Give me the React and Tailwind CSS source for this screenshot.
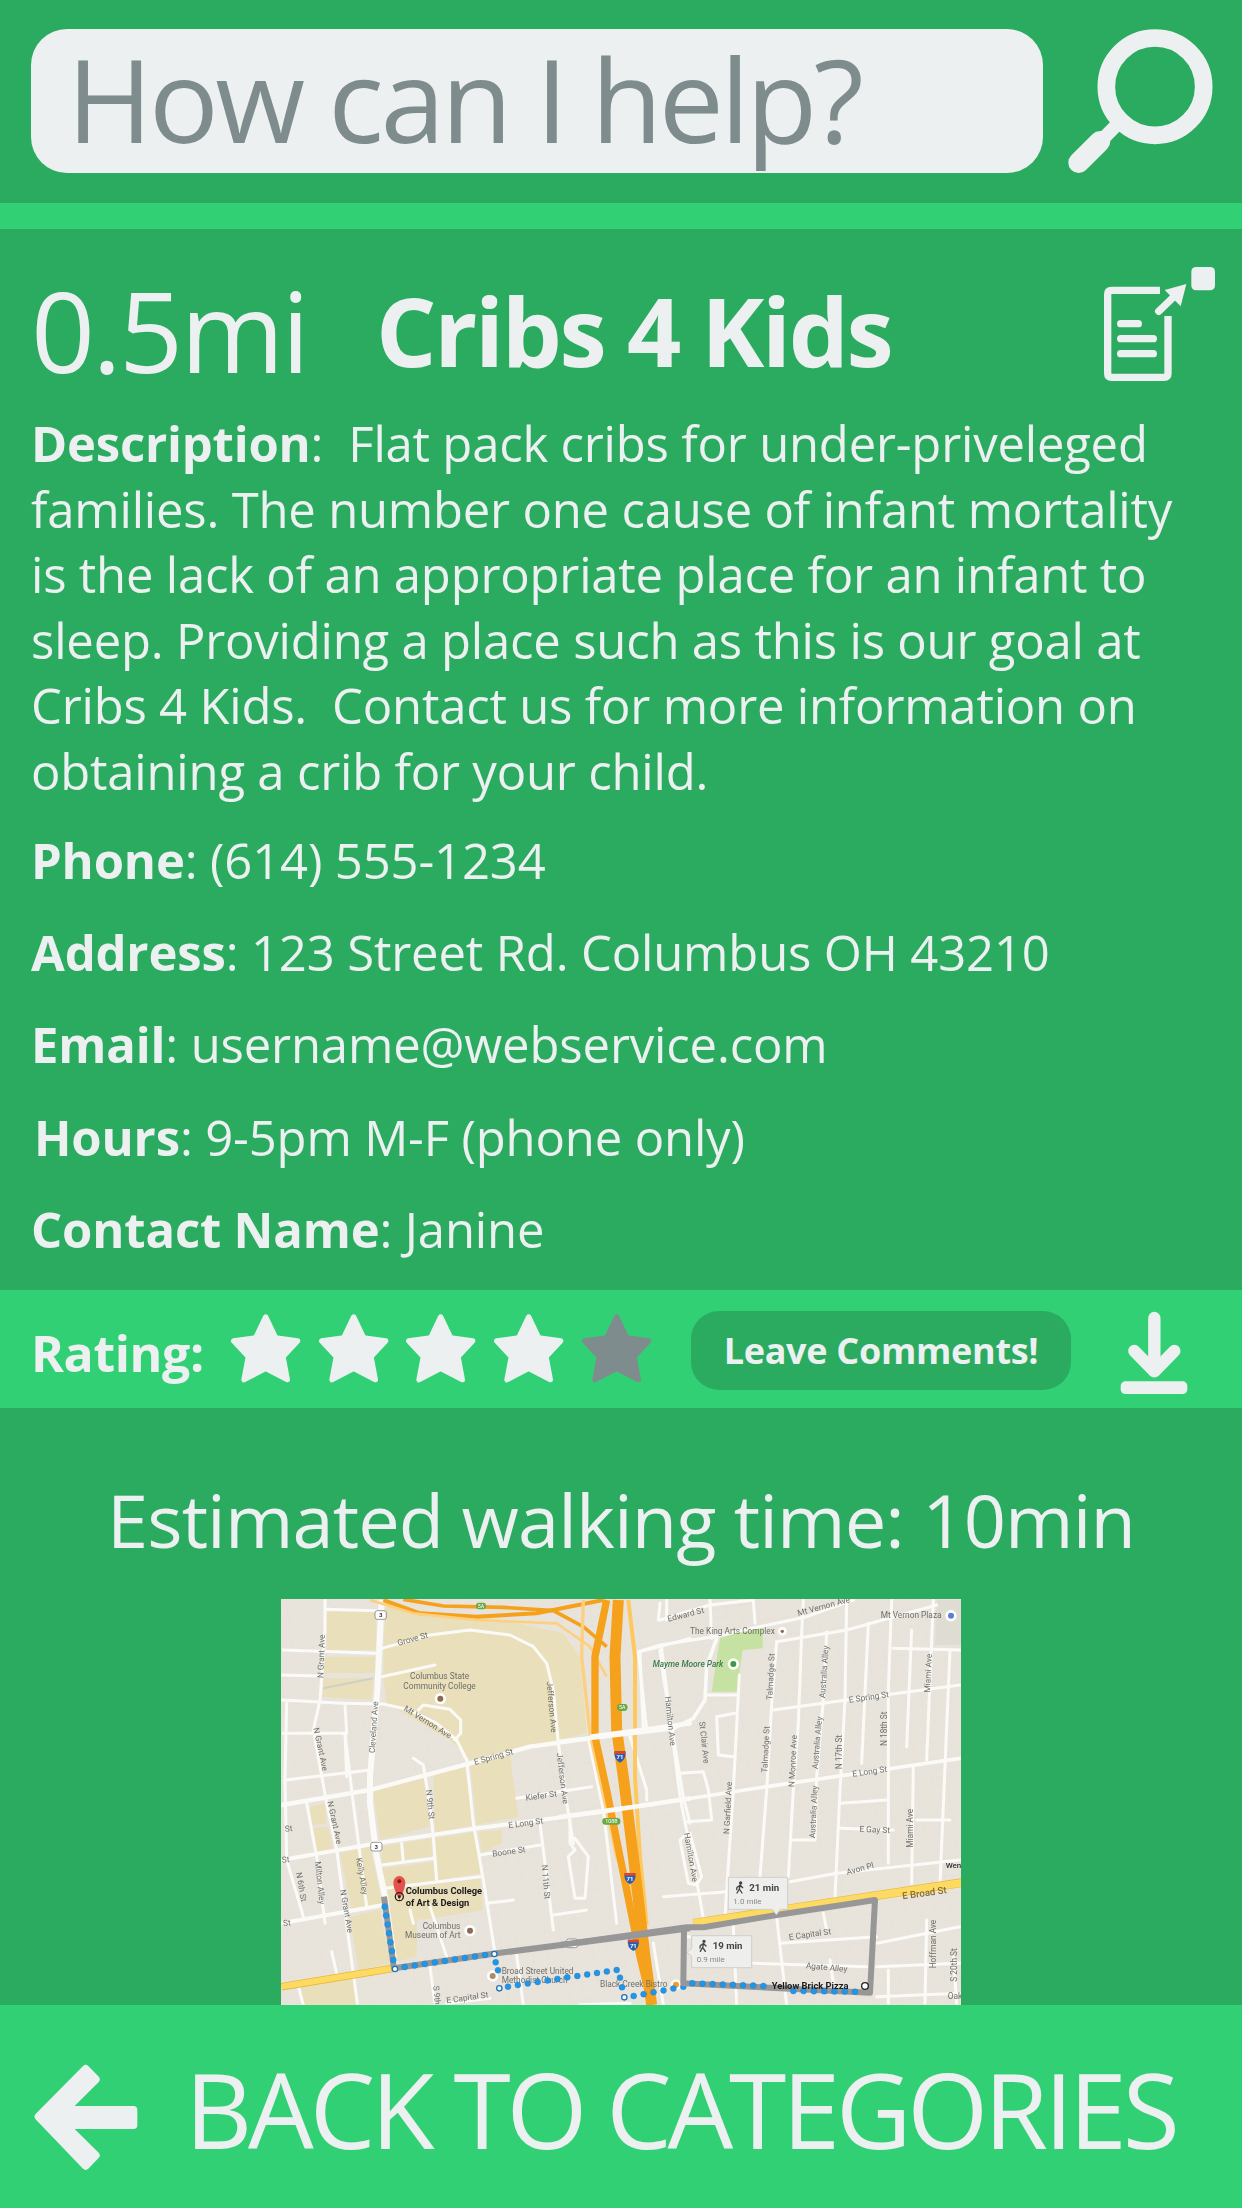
const SANS = { fontFamily: '"Open Sans", "Noto Sans", sans-serif' };

function Magnifier() {
  return (
    <svg width="180" height="165" viewBox="0 0 540 495" className="shrink-0">
      <circle cx="315" cy="200" r="146" fill="none" stroke="#ecf0f1" strokeWidth="53" />
      <path d="M150 365 L200 315" stroke="#ecf0f1" strokeWidth="40" />
      <path d="M86 428 L150 364" stroke="#ecf0f1" strokeWidth="62" strokeLinecap="round" />
    </svg>
  );
}

function DocIcon() {
  return (
    <svg width="182" height="160" viewBox="0 0 546 480" className="shrink-0">
      <path d="M300 151 H155 Q143 151 143 163 V400 Q143 412 155 412 H312 Q324 412 324 400 V228" fill="none" stroke="#ecf0f1" strokeWidth="22" />
      <rect x="394" y="81" width="71" height="70" rx="14" fill="#ecf0f1" />
      <path d="M296 214 L345 167" stroke="#ecf0f1" strokeWidth="22" strokeLinecap="round" />
      <path d="M379 132 L362 199 L314 150 Z" fill="#ecf0f1" />
      <rect x="171" y="240" width="75" height="22" rx="11" fill="#ecf0f1" />
      <rect x="171" y="285" width="120" height="22" rx="11" fill="#ecf0f1" />
      <rect x="171" y="330" width="120" height="22" rx="11" fill="#ecf0f1" />
    </svg>
  );
}

function Star({ fill }) {
  return (
    <svg width="82" height="90" viewBox="0 0 246 270" className="shrink-0">
      <path d="M122 36 L152 99 L218 108 L174 155 L187 224 L122 190 L57 224 L70 155 L26 108 L92 99 Z" fill={fill} stroke={fill} strokeWidth="16" strokeLinejoin="round" />
    </svg>
  );
}

function Download() {
  return (
    <svg width="110" height="105" viewBox="0 0 330 315" className="shrink-0">
      <path d="M163 54 V205" stroke="#ecf0f1" strokeWidth="37" strokeLinecap="round" />
      <path d="M103 153 L163 214 L223 153" fill="none" stroke="#ecf0f1" strokeWidth="37" strokeLinecap="round" strokeLinejoin="round" />
      <rect x="62" y="244" width="200" height="38" rx="14" fill="#ecf0f1" />
    </svg>
  );
}

function BackArrow() {
  return (
    <svg width="140" height="135" viewBox="0 0 420 405" className="shrink-0">
      <path d="M56 200 L197 57 L227 88 L135 180 H340 V225 H135 L227 316 L197 347 Z" fill="#ecf0f1" stroke="#ecf0f1" strokeWidth="24" strokeLinejoin="round" />
    </svg>
  );
}

const R3 = [
  ['40,180 320,190'], ['170,58 320,62'], ['165,30 165,120 150,330 130,420'], ['35,255 150,258'], ['335,260 495,225'],
  ['335,175 480,135 600,120 720,135 790,170 830,220 850,300 865,460 890,640 910,760'],
  ['35,330 220,340 340,342 420,360 500,400 560,450 590,510 610,700 640,870 675,1090'],
  ['445,360 460,345 540,358 572,390 572,430 555,450'],
  ['35,645 300,600 600,520 780,470 960,445 1260,400', 13], ['35,810 320,760 620,715 1000,665 1260,625', 12],
  ['40,430 225,430 230,560'], ['225,340 230,430'], ['130,420 170,640 200,780 262,1240'], ['225,430 250,640 290,950'],
  ['45,570 300,540'], ['50,340 45,570 50,810 100,980'], ['110,640 140,800 165,1000'], ['430,505 460,525 480,650 490,740 500,870'],
  ['335,825 490,805'], ['395,760 400,815'], ['345,895 630,860'], ['740,625 965,590'], ['630,795 810,765'], ['810,700 850,1020'],
  ['900,690 900,760 915,780 895,800 915,925 945,925 955,800 915,745'], ['35,1000 340,945', 12], ['650,940 730,930'], ['420,960 430,1000'],
  ['480,950 530,1100'], ['955,445 1000,660 1040,1000'], ['1080,440 1130,600 1130,630'], ['1110,190 1120,420'],
  ['1110,185 1170,170 1260,145'], ['1170,180 1180,260 1240,620 1260,700'], ['1190,90 1190,30'], ['850,975 950,960'],
  ['480,1130 495,1245'], ['740,1095 760,1245'], ['185,1085 200,1150'], ['85,1190 100,1245'], ['530,1240 660,1225'], ['930,1245 1080,1240', 10],
  ['1150,1060 1180,1245'], ['1240,1040 1260,1040'],
];
const R4 = [
  ['300,90 450,45 580,30'], ['300,40 295,90'], ['585,100 580,30'], ['450,30 455,145'], ['650,155 860,120 1130,45'],
  ['460,140 740,80 880,30'], ['235,185 300,165 460,140'], ['235,185 260,420'], ['305,175 320,300 360,620 415,900 430,985'],
  ['470,145 440,230 435,330 400,385 340,415', 11], ['0,455 340,415', 13], ['445,315 530,315'], ['640,360 860,330 1200,285'],
  ['470,380 525,370'], ['470,380 475,495 520,500'], ['360,550 430,545 445,600 455,690 380,695'], ['538,255 520,600 495,980'],
  ['650,155 635,340 620,600 600,860'], ['730,30 725,130 715,400 700,600 685,860'], ['800,125 790,330 770,560 765,750 692,750'],
  ['860,30 855,330 840,600 825,920'], ['925,100 915,310 905,520'], ['995,30 985,300 985,820'], ['1055,120 1040,470'],
  ['1120,30 1100,510'], ['1060,530 1055,880'], ['1170,180 1140,880'], ['1000,175 1200,180'], ['0,680 360,630 620,590 1200,505', 11],
  ['840,640 980,630'], ['840,715 1000,720'], ['1070,690 1170,690'], ['690,875 830,850 1200,810'], ['310,920 500,905'],
  ['375,735 360,750 385,880 410,885 425,860 390,730'], ['660,1060 950,1040'], ['950,1060 1200,1010'], ['580,1120 920,1130'], ['950,1130 1200,1120'],
  ['1100,990 1095,1240'], ['1180,1100 1190,1240'], ['650,980 680,1245'], ['520,1010 530,1245'], ['790,970 800,1020'],
  ['810,1110 820,1180'], ['985,1140 985,1240'], ['950,1220 1200,1210'],
];
const L3 = [
  ['Grove St', 385, 167, -15], ['N Grant Ave', 160, 265, -88], ['Columbus State', 420, 268, 0], ['Community College', 400, 297, 0],
  ['Mt Vernon Ave', 400, 360, 32], ['Cleveland Ave', 314, 490, -86], ['N Grant Ave', 130, 415, 78], ['E Spring St', 615, 525, -16],
  ['Jefferson Ave', 830, 275, 85], ['Jefferson Ave', 860, 490, 83], ['Kiefer St', 768, 632, -8], ['N 9th St', 468, 600, 84],
  ['N Grant Ave', 172, 635, 78], ['E Long St', 716, 715, -8], ['Boone St', 668, 800, -8], ['N 11th St', 815, 825, 85],
  ['Kelly Alley', 258, 805, 80], ['Milton Alley', 135, 815, 84], ['N 6th St', 78, 848, 80], ['N Grant Ave', 210, 900, 80],
  ['Columbus', 458, 1016, 0], ['Museum of Art', 405, 1044, 0], ['Broad Street United', 695, 1152, 0], ['Methodist Church', 695, 1178, 0],
  ['Black Creek Bistro', 990, 1192, 0], ['S 9th', 490, 1188, 85], ['E Capital St', 530, 1240, -8], ['St', 40, 1008, -5], ['St', 45, 725, -5], ['St', 36, 818, -5],
];
const L4 = [
  ['Edward St', 325, 95, -14], ['Mt Vernon Ave', 715, 78, -15], ['Mt Vernon Plaza', 962, 85, 0], ['The King Arts Complex', 390, 132, 0],
  ['Hamilton Ave', 315, 320, 84], ['Talmadge St', 637, 330, -87], ['Australia Alley', 795, 325, -86], ['Miami Ave', 1110, 308, -87],
  ['E Spring St', 868, 338, -8], ['St Clair Ave', 418, 395, 84], ['Talmadge St', 622, 548, -87], ['N Monroe Ave', 703, 592, -87],
  ['Australia Alley', 773, 538, -85], ['N 17th St', 847, 538, -90], ['N 18th St', 982, 468, -90], ['E Long St', 878, 560, -8],
  ['N Garfield Ave', 508, 733, -87], ['Australia Alley', 765, 745, -87], ['E Gay St', 898, 725, 3], ['Miami Ave', 1058, 773, -90],
  ['Avon Pl', 862, 855, -15], ['Hamilton Ave', 372, 730, 80], ['E Capital St', 688, 1050, -8], ['Agate Alley', 737, 1135, 5],
  ['Hoffman Ave', 1128, 1135, -90], ['S 20th St', 1192, 1175, -90], ['Oak', 1163, 1228, 0],
];
const Label = ([t, x, y, r]) => (
  <text key={t + x + y} x={x} y={y} fontSize="25" fill="#6f6f6b" fontFamily="Roboto, sans-serif" transform={r ? `rotate(${r} ${x} ${y})` : undefined}>{t}</text>
);
const Roads = ({ list }) => list.map(([p, w], i) => (
  <polyline key={i} points={p} fill="none" stroke="#fbfaf7" strokeWidth={w || 9} strokeLinejoin="round" strokeLinecap="round" />
));
const Tan = ({ p }) => <polygon points={p} fill="#e9dfbb" />;
const Dots = ({ d }) => d.map(([x, y], i) => <circle key={i} cx={x} cy={y} r="9" fill="#2196e6" stroke="#1a73c0" strokeWidth="1" />);
const line = (x0, y0, x1, y1, n) => Array.from({ length: n }, (_, i) => [x0 + ((x1 - x0) * i) / (n - 1), y0 + ((y1 - y0) * i) / (n - 1)]);
const Shield = ({ x, y }) => (
  <g>
    <path d={`M${x - 16} ${y - 16} H${x + 16} Q${x + 20} ${y + 8} ${x} ${y + 18} Q${x - 20} ${y + 8} ${x - 16} ${y - 16} Z`} fill="#2a5db0" />
    <path d={`M${x - 16} ${y - 16} H${x + 16} L${x + 17} ${y - 8} H${x - 17} Z`} fill="#d9452f" />
    <text x={x} y={y + 8} fontSize="18" fill="#fff" textAnchor="middle" fontFamily="Roboto, sans-serif" fontWeight="700">71</text>
  </g>
);
const Exit = ({ x, y, t, w = 30 }) => (
  <g>
    <rect x={x - w / 2} y={y - 10} width={w} height="20" rx="9" fill="#6aa842" />
    <text x={x} y={y + 6} fontSize="16" fill="#fff" textAnchor="middle" fontFamily="Roboto, sans-serif">{t}</text>
  </g>
);
const Badge = ({ x, y, t }) => (
  <g>
    <rect x={x - 17} y={y - 13} width="34" height="26" rx="7" fill="#fff" stroke="#666" strokeWidth="2" />
    <text x={x} y={y + 7} fontSize="18" fill="#333" textAnchor="middle" fontFamily="Roboto, sans-serif" fontWeight="700">{t}</text>
  </g>
);
const Walker = ({ x, y }) => (
  <g fill="none" stroke="#444" strokeWidth="4" strokeLinecap="round" transform={`translate(${x} ${y})`}>
    <circle cx="3" cy="-13" r="3" fill="#444" />
    <path d="M2 -7 L-1 5 L-8 17 M-1 5 L7 17 M1 -6 L-8 0 L-9 7 M2 -6 L9 1" />
  </g>
);
const Callout = ({ x, y, main, sub, dir }) => (
  <g>
    <path
      d={dir === 'down'
        ? `M${x} ${y} h178 v96 h-22 l-12 16 l-12 -16 h-132 Z`
        : `M${x} ${y} h180 v96 h-180 v-34 l-14 -12 l14 -12 Z`}
      fill="#eeeeec" stroke="#cfcfcb" strokeWidth="3"
    />
    <Walker x={x + 34} y={y + 30} />
    <text x={x + 63} y={y + 40} fontSize="29" fontWeight="700" fill="#444" fontFamily="Roboto, sans-serif">{main}</text>
    <text x={x + 15} y={y + 79} fontSize="24" fill="#888" fontFamily="Roboto, sans-serif">{sub}</text>
  </g>
);

function MapDrawing() {
  return (
    <svg width="680" height="406" viewBox="281 1599 680 406" className="block blur-[0.35px]">
      <defs>
        <pattern id="blocks" width="15" height="9" patternUnits="userSpaceOnUse" patternTransform="rotate(-8)">
          <path d="M0 0 H15 M0 0 V9" stroke="#dfdbd1" strokeWidth="0.6" fill="none" />
        </pattern>
      </defs>
      <rect x="281" y="1599" width="680" height="406" fill="#e8e4dc" />
      <rect x="281" y="1599" width="680" height="406" fill="url(#blocks)" />
      <g transform="translate(270 1590) scale(0.33333)">
        <Tan p="170,65 318,65 318,180 170,180" /><Tan p="165,200 315,200 315,250 160,250" /><Tan p="160,265 310,265 305,330 160,322" />
        <Tan p="345,50 700,90 880,130 930,200 950,430 600,510 540,450 350,340 340,260" />
        <Tan p="600,520 720,495 745,680 620,705" /><Tan p="310,600 460,555 480,710 330,750" /><Tan p="490,550 585,530 610,705 495,730" />
        <Tan p="395,760 485,745 485,800 400,810" /><Tan p="335,770 390,760 395,815 335,825" /><Tan p="495,745 615,725 630,850 505,870" />
        <Tan p="625,725 695,720 695,760 635,790" /><Tan p="335,835 490,815 495,875 345,895" /><Tan p="350,900 630,865 640,960 520,980 440,990 440,1100 360,1120" />
        <Tan p="240,980 330,960 360,1120 265,1140" /><Tan p="120,650 165,640 170,700 125,705" /><Tan p="130,715 175,710 190,780 140,785" />
        <Tan p="210,790 300,770 330,910 340,940 245,960" /><Tan p="95,1190 250,1165 260,1245 95,1245" />
        <polyline points="160,295 310,265" fill="none" stroke="#cfcfc6" strokeWidth="6" />
        <Roads list={R3} />
        <polyline points="335,30 322,300 300,560 300,640 320,800 345,920 375,1130" fill="none" stroke="#fbfaf7" strokeWidth="18" strokeLinejoin="round" />
        <polyline points="340,30 450,70 620,80 800,70 1000,30" fill="none" stroke="#f6a11c" strokeWidth="12" />
        <polyline points="400,28 520,48 700,52 850,62 940,110 1010,170" fill="none" stroke="#f6a11c" strokeWidth="11" />
        <polyline points="300,30 430,70 620,90 860,100 960,170 1010,260" fill="none" stroke="#fdd080" strokeWidth="8" />
        <polyline points="940,30 935,200 960,430 1040,800 1130,1005" fill="none" stroke="#fdd080" strokeWidth="10" />
        <polyline points="1075,30 1095,200 1095,420 1095,560 1110,800 1130,1005" fill="none" stroke="#fdc95f" strokeWidth="12" />
        <polyline points="1010,30 975,200 975,440 1010,600 1070,900 1110,1100 1145,1245" fill="none" stroke="#f6a11c" strokeWidth="22" />
        <polyline points="1045,30 1035,200 1040,420 1060,560 1090,800 1125,1100 1145,1245" fill="none" stroke="#f6a11c" strokeWidth="33" />
        <polyline points="960,440 1260,400" fill="none" stroke="#fbfaf7" strokeWidth="13" />
        <polyline points="1000,665 1260,625" fill="none" stroke="#fbfaf7" strokeWidth="13" />
        <polyline points="35,1190 370,1135" fill="none" stroke="#e9b83a" strokeWidth="23" />
        <polyline points="35,1190 370,1135" fill="none" stroke="#fddb63" strokeWidth="18" />
        <polyline points="342,920 372,1135 680,1090 1260,1015" fill="none" stroke="#979797" strokeWidth="18" strokeLinejoin="round" />
        <Shield x={1050} y={500} /><Shield x={1080} y={865} /><Shield x={1090} y={1065} />
        <Badge x={332} y={75} t="3" /><Badge x={319} y={770} t="3" /><Badge x={906} y={1060} t="62" />
        <Exit x={633} y={48} t="5A" /><Exit x={1057} y={352} t="5A" /><Exit x={1024} y={694} t="108B" w={54} />
        {L3.map(Label)}
        <path d="M388 930 Q370 895 370 878 A18 20 0 1 1 406 878 Q406 895 388 930 Z" fill="#e5514b" />
        <circle cx="388" cy="874" r="6" fill="#7c1d1a" />
        <circle cx="388" cy="920" r="12" fill="none" stroke="#222" strokeWidth="4" /><circle cx="388" cy="920" r="4" fill="#222" />
        <text x="407" y="912" fontSize="28" fontWeight="700" fill="#1a1a1a" fontFamily="Roboto, sans-serif">Columbus College</text>
        <text x="407" y="947" fontSize="28" fontWeight="700" fill="#1a1a1a" fontFamily="Roboto, sans-serif">of Art &amp; Design</text>
        <circle cx="511" cy="326" r="17" fill="#fff" /><circle cx="511" cy="326" r="9" fill="#8a6a50" />
        <circle cx="600" cy="1022" r="17" fill="#fff" /><circle cx="600" cy="1022" r="9" fill="#8a6a50" />
        <circle cx="668" cy="1158" r="17" fill="#fff" /><circle cx="668" cy="1158" r="9" fill="#b08a60" />
        <circle cx="1218" cy="1184" r="16" fill="#fff" /><circle cx="1218" cy="1184" r="9" fill="#f39c2a" />
        <Dots d={line(344, 950, 370, 1110, 7)} />
        <Dots d={line(404, 1131, 645, 1095, 9)} />
        <Dots d={line(677, 1117, 684, 1141, 2)} />
        <Dots d={line(714, 1190, 892, 1162, 7)} />
        <Dots d={line(922, 1158, 1040, 1140, 5)} />
        <Dots d={[[1050, 1163], [1056, 1192]]} />
        <Dots d={line(1091, 1218, 1240, 1190, 6)} />
        {[[375, 1137], [673, 1092], [688, 1195], [1063, 1222]].map(([x, y]) => (
          <circle key={x} cx={x} cy={y} r="8" fill="#fff" stroke="#1a73c0" strokeWidth="4" />
        ))}
      </g>
      <g transform="translate(560 1590) scale(0.33333)">
        <polygon points="1130,30 1205,30 1205,165 1125,165" fill="#dfdcd4" />
        <polygon points="480,145 608,105 608,175 548,180 530,305 455,305" fill="#c6e2a2" />
        <Roads list={R4} />
        <polyline points="400,1000 1205,878" fill="none" stroke="#e9b83a" strokeWidth="27" />
        <polyline points="400,1000 1205,878" fill="none" stroke="#fddb63" strokeWidth="23" />
        <polyline points="0,1065 380,1012 430,1012 650,975 945,930 930,1208 370,1180 372,1020" fill="none" stroke="#979797" strokeWidth="18" strokeLinejoin="round" />
        <Dots d={line(397, 1180, 610, 1188, 8)} />
        <Dots d={line(700, 1203, 885, 1205, 7)} />
        <Exit x={187} y={352} t="5A" />
        {L4.map(Label)}
        <text x="278" y="230" fontSize="25" fontStyle="italic" fontWeight="500" fill="#3c7c4c" fontFamily="Roboto, sans-serif">Mayme Moore Park</text>
        <text x="1157" y="833" fontSize="24" fontWeight="500" fill="#333" fontFamily="Roboto, sans-serif">Wen</text>
        <text x="1028" y="928" fontSize="29" fill="#8a6a2a" fontFamily="Roboto, sans-serif" fontWeight="500" transform="rotate(-8 1028 928)">E Broad St</text>
        <circle cx="667" cy="124" r="13" fill="#fff" /><circle cx="667" cy="124" r="5" fill="#8a6a50" />
        <circle cx="1173" cy="77" r="17" fill="#fff" /><circle cx="1173" cy="77" r="9" fill="#5b7fd8" />
        <circle cx="520" cy="222" r="17" fill="#fff" /><circle cx="520" cy="222" r="9" fill="#3f9a3f" />
        <Callout x={505} y={862} main="21 min" sub="1.0 mile" dir="down" />
        <Callout x={395} y={1037} main="19 min" sub="0.9 mile" dir="left" />
        <text x="635" y="1197" fontSize="28" fontWeight="700" fill="#1a1a1a" fontFamily="Roboto, sans-serif">Yellow Brick Pizza</text>
        <circle cx="915" cy="1188" r="10" fill="#fff" stroke="#222" strokeWidth="4" />
      </g>
    </svg>
  );
}

function Row({ label, value, className = '' }) {
  return (
    <p className={`h-[92.2px] text-[49px] leading-[92.2px] tracking-[-0.15px] whitespace-nowrap ${className}`}>
      <span className="font-bold">{label}</span>: {value}
    </p>
  );
}

export default function App() {
  return (
    <div style={SANS} className="w-[1242px] h-[2208px] overflow-hidden flex flex-col bg-[#2bab5f] text-[#ecf0f1]">
      <header className="h-[203px] shrink-0 flex items-start pl-[31px] pt-[20px] gap-[7px]">
        <div className="w-[1012px] h-[144px] mt-[9px] rounded-[36px] bg-[#ecf0f1] pl-[36px] text-[#7f8c8d] text-[116px] leading-[138px] tracking-[-3.5px] whitespace-nowrap">
          How can I help?
        </div>
        <Magnifier />
      </header>
      <div className="h-[26px] shrink-0 bg-[#32d074]" />
      <main className="h-[1061px] shrink-0 pl-[31px] pr-0 flex flex-col">
        <div className="h-[182px] shrink-0 flex items-start pt-[11px]">
          <span className="text-[112px] leading-[180px] tracking-[-2.7px] w-[345px] shrink-0 whitespace-nowrap">0.5mi</span>
          <span className="text-[95px] leading-[180px] font-bold tracking-[-2.3px] whitespace-nowrap w-[684px] shrink-0">Cribs 4 Kids</span>
          <DocIcon />
        </div>
        <p className="text-[49px] leading-[65.6px] tracking-[-0.2px] whitespace-nowrap h-[403px] shrink-0">
          <span className="font-bold">Description</span>:&nbsp; Flat pack cribs for under-priveleged<br />
          families. The number one cause of infant mortality<br />
          is the lack of an appropriate place for an infant to<br />
          sleep. Providing a place such as this is our goal at<br />
          Cribs 4 Kids.&nbsp; Contact us for more information on<br />
          obtaining a crib for your child.
        </p>
        <Row label="Phone" value="(614) 555-1234" />
        <Row label="Address" value="123 Street Rd. Columbus OH 43210" />
        <Row label="Email" value="username@webservice.com" />
        <Row label="Hours" value="9-5pm M-F (phone only)" className="pl-[3px]" />
        <Row label="Contact Name" value="Janine" />
      </main>
      <section className="h-[118px] shrink-0 bg-[#32d074] flex items-center pl-[31px]">
        <span className="font-bold text-[50px] tracking-[-0.4px] w-[194px] shrink-0 whitespace-nowrap pt-[8px]">Rating:</span>
        <div className="flex gap-[5.7px] w-[466px] shrink-0 pt-[2px]">
          <Star fill="#ecf0f1" /><Star fill="#ecf0f1" /><Star fill="#ecf0f1" /><Star fill="#ecf0f1" /><Star fill="#7f8c8d" />
        </div>
        <div className="w-[380px] h-[79px] shrink-0 rounded-[28px] bg-[#2bab5f] flex items-center justify-center font-bold text-[36px] tracking-[-0.3px] whitespace-nowrap mt-[3px]">
          Leave Comments!
        </div>
        <div className="ml-[29px] pt-[7px]"><Download /></div>
      </section>
      <section className="h-[597px] shrink-0 flex flex-col items-center overflow-hidden">
        <h2 className="h-[191px] shrink-0 pt-[62px] text-[74px] leading-[100px] tracking-[-0.9px] whitespace-nowrap">Estimated walking time: 10min</h2>
        <MapDrawing />
      </section>
      <footer className="h-[203px] shrink-0 bg-[#32d074] flex items-center pl-[20px] gap-[25px]">
        <div className="pt-[22px]"><BackArrow /></div>
        <span className="text-[104px] leading-[120px] tracking-[-4.15px] whitespace-nowrap pt-[4px]">BACK TO CATEGORIES</span>
      </footer>
    </div>
  );
}
